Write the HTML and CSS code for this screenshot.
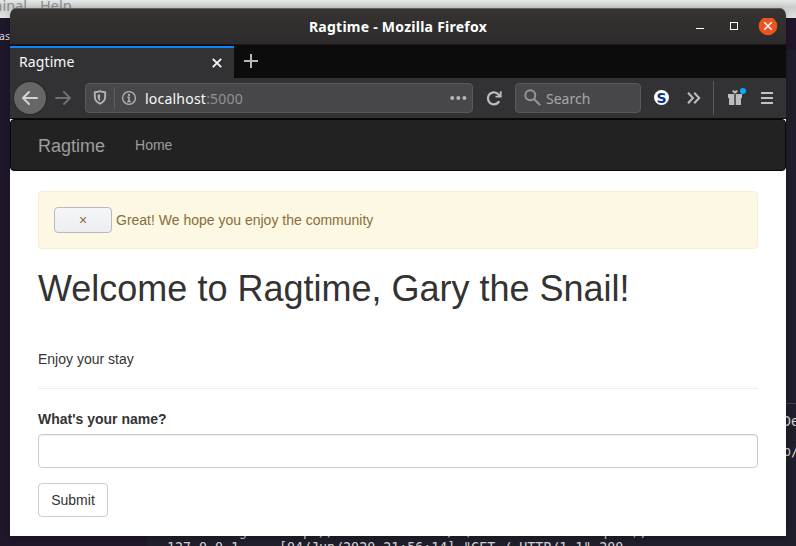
FILE: index.html
```html
<!DOCTYPE html>
<html lang="en">
<head>
<meta charset="utf-8">
<title>Ragtime</title>
<link rel="stylesheet" href="styles.css">
</head>
<body>
<div class="desktop">
  <div class="menu-strip"><span class="menu-a">minal</span><span class="menu-b">Help</span></div>
  <div class="back-tab">as</div>
  <div class="right-top"></div>
  <div class="right-line"></div>
  <div class="right-text right-a">De</div>
  <div class="right-text right-b">p/</div>
  <pre class="terminal"> * Running on http://127.0.0.1:5000/ (Press CTRL+C to quit),
127.0.0.1 - - [04/Jun/2020 21:56:14] "GET / HTTP/1.1" 200 -</pre>

  <div class="window">
    <header class="titlebar">
      <span class="title">Ragtime - Mozilla Firefox</span>
      <svg class="controls" width="90" height="20" viewBox="0 0 90 20">
        <path d="M0 10.5h8" stroke="#fff"/>
        <rect x="34.5" y="4.5" width="7" height="7" fill="none" stroke="#fff"/>
        <circle cx="72" cy="8" r="9.3" fill="#e95420"/>
        <path d="M68.3 4.3l7.4 7.4M75.7 4.3l-7.4 7.4" stroke="#fff" stroke-width="1.5"/>
      </svg>
    </header>
    <div class="tabs">
      <div class="tab"><span>Ragtime</span>
        <svg width="10" height="10" viewBox="0 0 10 10"><path d="M.8.8l8.4 8.4M9.2.8L.8 9.2" stroke="#f4f4f4" stroke-width="1.9"/></svg>
      </div>
      <svg class="plus" width="14" height="14" viewBox="0 0 14 14"><path d="M7 0v14M0 7h14" stroke="#b8b8b8" stroke-width="2"/></svg>
    </div>
    <div class="toolbar">
      <div class="back">
        <svg width="16" height="16" viewBox="0 0 16 16" fill="none" stroke="#d3d3d4" stroke-width="2" stroke-linecap="round" stroke-linejoin="round"><path d="M15 8H1.2M7 2L1 8l6 6"/></svg>
      </div>
      <svg class="forward" width="16" height="16" viewBox="0 0 16 16" fill="none" stroke="#6f6f71" stroke-width="2" stroke-linecap="round" stroke-linejoin="round"><path d="M1 8h13.8M9 2l6 6-6 6"/></svg>
      <div class="urlbar">
        <svg class="shield" width="14" height="15" viewBox="0 0 14 15"><path d="M7 1.2c1.7.8 3.500 1 5.200 1v4.300c0 3.300-1.800 5.700-5.200 7.200-3.400-1.500-5.200-3.900-5.200-7.200V2.200c1.700 0 3.500-.2 5.200-1z" fill="none" stroke="#b5b5b6" stroke-width="1.9" stroke-linejoin="round"/><path d="M7 4.300v6.900c-1.500-1-2.400-2.500-2.400-4.700V4.700z" fill="#b5b5b6"/></svg>
        <i class="divider"></i>
        <svg class="info" width="16" height="16" viewBox="0 0 16 16"><circle cx="8" cy="8" r="6.400" fill="none" stroke="#b5b5b6" stroke-width="1.300"/><circle cx="8" cy="4.900" r="1.100" fill="#b5b5b6"/><path d="M6.500 7.200H8v4.300M6.300 11.500h3.400" stroke="#b5b5b6" stroke-width="1.500" fill="none"/></svg>
        <span class="url">localhost<em>:5000</em></span>
        <svg class="dots" width="17" height="4" viewBox="0 0 17 4" fill="#b5b5b6"><circle cx="2.200" cy="2" r="2"/><circle cx="8.300" cy="2" r="2"/><circle cx="14.400" cy="2" r="2"/></svg>
      </div>
      <svg class="reload" width="16" height="16" viewBox="0 0 16 16"><path d="M12.700 12A6 6 0 1 1 13 5.200" fill="none" stroke="#bdbdbe" stroke-width="2.200" stroke-linecap="round"/><path d="M14.700 1.200v5.500H9.500" fill="none" stroke="#bdbdbe" stroke-width="1.800"/></svg>
      <div class="search">
        <svg width="17" height="17" viewBox="0 0 17 17" fill="none" stroke="#979798" stroke-width="2"><circle cx="6.300" cy="6.300" r="5"/><path d="M10 10l5.600 5.600" stroke-linecap="round"/></svg>
        <span>Search</span>
      </div>
      <div class="badge">S</div>
      <svg class="chevrons" width="14" height="12" viewBox="0 0 14 12" fill="none" stroke="#bdbdbe" stroke-width="2"><path d="M1 .7L6 6l-5 5.300M7.200.7l5 5.300-5 5.300"/></svg>
      <i class="toolbar-line"></i>
      <svg class="gift" width="20" height="18" viewBox="0 0 20 18"><path d="M1 6h6.300v4H1zM8.700 6H15v4H8.700zM2 10h5.300v7H2zM8.700 10H14v7H8.700z" fill="#bdbdbe"/><path d="M5.500 2.200c1.500 0 2 .3 2.500.9.500-.6 1-.9 2.500-.9v1.700L8.700 5.500H7.300L5.500 3.900z" fill="#bdbdbe"/><circle cx="16" cy="3" r="3" fill="#00adff"/></svg>
      <svg class="burger" width="12" height="12" viewBox="0 0 12 12"><path d="M0 1h12M0 6h12M0 11h12" stroke="#c2c2c3" stroke-width="2"/></svg>
    </div>
    <main class="page">
      <nav class="navbar"><a class="brand">Ragtime</a><a class="link">Home</a></nav>
      <div class="container">
        <div class="alert"><button type="button" class="close">×</button><span>Great! We hope you enjoy the community</span></div>
        <h1>Welcome to Ragtime, Gary the Snail!</h1>
        <p>Enjoy your stay</p>
        <hr>
        <form>
          <label for="name">What's your name?</label>
          <input id="name" type="text">
          <button type="button" class="submit">Submit</button>
        </form>
      </div>
    </main>
  </div>
</div>
</body>
</html>
```
FILE: styles.css
```css
* { box-sizing: border-box; }
body { margin: 0; }
svg { display: block; flex: none; }

.desktop {
  position: relative;
  width: 796px;
  height: 546px;
  overflow: hidden;
  background: linear-gradient(90deg, #20172a 0 147px, #211e2b 147px);
  font-family: "Noto Sans", sans-serif;
}
.menu-strip {
  position: absolute;
  inset: 0 0 auto;
  height: 18px;
  background: linear-gradient(#e5e8e7, #c9cdcc 7px, #e2e3e3);
  color: #8c8c8c;
  font-size: 14.500px;
  line-height: 18px;
}
.menu-a, .menu-b { position: absolute; top: -4px; }
.menu-a { right: 769px; }
.menu-b { left: 40px; }
.back-tab {
  position: absolute;
  right: 786px;
  top: 26px;
  height: 21px;
  color: #dad8dd;
  font-size: 10.500px;
  line-height: 21px;
}
.right-top {
  position: absolute;
  right: 0;
  top: 18px;
  width: 10px;
  height: 32px;
  background: #21152a;
}
.right-line {
  position: absolute;
  right: 0;
  top: 403px;
  width: 10px;
  height: 1px;
  background: #413e49;
}
.right-text {
  position: absolute;
  left: 783px;
  color: #d4d3d7;
  font: 13.3px/18px "DejaVu Sans Mono", monospace;
}
.right-a { top: 413px; }
.right-b { top: 443px; }
.terminal {
  position: absolute;
  left: 167px;
  top: 524px;
  margin: 0;
  color: #d4d3d7;
  font: 13.3px/16px "DejaVu Sans Mono", monospace;
}

.window {
  position: absolute;
  left: 10px;
  top: 8px;
  display: flex;
  flex-direction: column;
  width: 776px;
  height: 528px;
  border-radius: 7px 7px 0 0;
  background: #fff;
  box-shadow: 0 2px 6px rgba(0, 0, 0, .25);
  overflow: hidden;
}
.titlebar {
  position: relative;
  display: flex;
  justify-content: center;
  height: 37px;
  background: linear-gradient(#353431, #2c2a2b);
  border-bottom: 1px solid #191819;
  box-shadow: inset 0 1px #605f5c;
  color: #fff;
}
.title { font-size: 14px; letter-spacing: .25px; font-weight: 700; line-height: 37px; }
.controls { position: absolute; left: 686px; top: 10px; }
.tabs { display: flex; height: 33px; background: #0c0c0d; }
.tab {
  display: flex;
  align-items: center;
  justify-content: space-between;
  width: 224px;
  margin-top: 1px;
  padding: 0 12px 0 9px;
  border-top: 2px solid #0a84ff;
  background: #323234;
  color: #f9f9fa;
  font-size: 14px;
  letter-spacing: .1px;
}
.tab span { margin-bottom: 3px; }
.tab svg { margin-bottom: 1px; }
.plus { margin: 9px 0 0 10px; }
.toolbar {
  display: flex;
  align-items: center;
  height: 41px;
  padding-bottom: 1px;
  border-bottom: 1px solid #0c0c0d;
  background: #323234;
  font-size: 14px;
}
.back {
  display: flex;
  align-items: center;
  justify-content: center;
  width: 32px;
  height: 32px;
  margin-left: 4px;
  border-radius: 50%;
  background: #666667;
  box-shadow: 0 0 0 1px #29292b;
}
.forward { margin-left: 9px; }
.urlbar, .search {
  display: flex;
  align-items: center;
  height: 30px;
  border: 1px solid #59595b;
  border-radius: 4px;
  background: #474749;
}
.urlbar { width: 388px; margin-left: 14px; padding: 0 5px 0 7px; }
.divider { width: 1px; height: 22px; margin: 0 6px 0 7px; background: #5b5e66; }
.url { margin: 2px 0 0 8px; color: #f9f9fa; letter-spacing: .22px; }
.url em { color: #929293; font-style: normal; }
.dots { margin-left: auto; }
.reload { margin-left: 13px; }
.search { width: 126px; margin-left: 13px; padding-left: 8px; color: #a8a8a9; }
.search span { margin: 2px 0 0 5px; }
.badge {
  width: 15px;
  height: 15px;
  margin-left: 13px;
  border-radius: 50%;
  background: #fff;
  color: #09368d;
  font: 900 14px/16px "DejaVu Sans", sans-serif;
  text-align: center;
}
.chevrons { margin-left: 18px; }
.toolbar-line { width: 1px; height: 34px; margin-left: 12px; background: #59595b; }
.gift { margin: -2px 0 0 13px; }
.burger { margin-left: 14px; }

.page {
  flex: 1;
  background: #fff;
  color: #333;
  font: 14px/20px "Liberation Sans", Arial, sans-serif;
}
.navbar {
  display: flex;
  align-items: center;
  height: 52px;
  margin-bottom: 20px;
  padding-left: 27px;
  border: 1px solid #080808;
  border-radius: 4px;
  background: #222;
  color: #9d9d9d;
}
.brand { margin-top: 1px; font-size: 18px; }
.link { margin-left: 30px; }
.container { padding: 0 28px; }
.alert {
  display: flex;
  align-items: center;
  height: 58px;
  padding: 15px;
  border: 1px solid #faebcc;
  border-radius: 4px;
  background: #fcf8e3;
  color: #8a6d3b;
}
.close {
  width: 58px;
  height: 26px;
  margin-right: 4px;
  padding: 0;
  border: 1px solid #b5b9c2;
  border-radius: 4px;
  background: linear-gradient(#f5f6f8, #eceef1);
  color: #8a6d3b;
  font: inherit;
}
h1 { margin: 20px 0 40px; font-size: 36px; font-weight: 500; line-height: 40px; }
p { margin: 0; }
hr { height: 1px; margin: 19px 0 20px; border: 0; background: #eee; }
label { display: block; margin-bottom: 5px; font-weight: 700; }
input {
  display: block;
  width: 100%;
  height: 34px;
  margin-bottom: 15px;
  border: 1px solid #ccc;
  border-radius: 4px;
  box-shadow: inset 0 1px 1px rgba(0, 0, 0, .075);
}
.submit {
  display: block;
  width: 70px;
  height: 34px;
  padding: 0;
  border: 1px solid #ccc;
  border-radius: 4px;
  background: #fff;
  color: #333;
  font: inherit;
}
```
